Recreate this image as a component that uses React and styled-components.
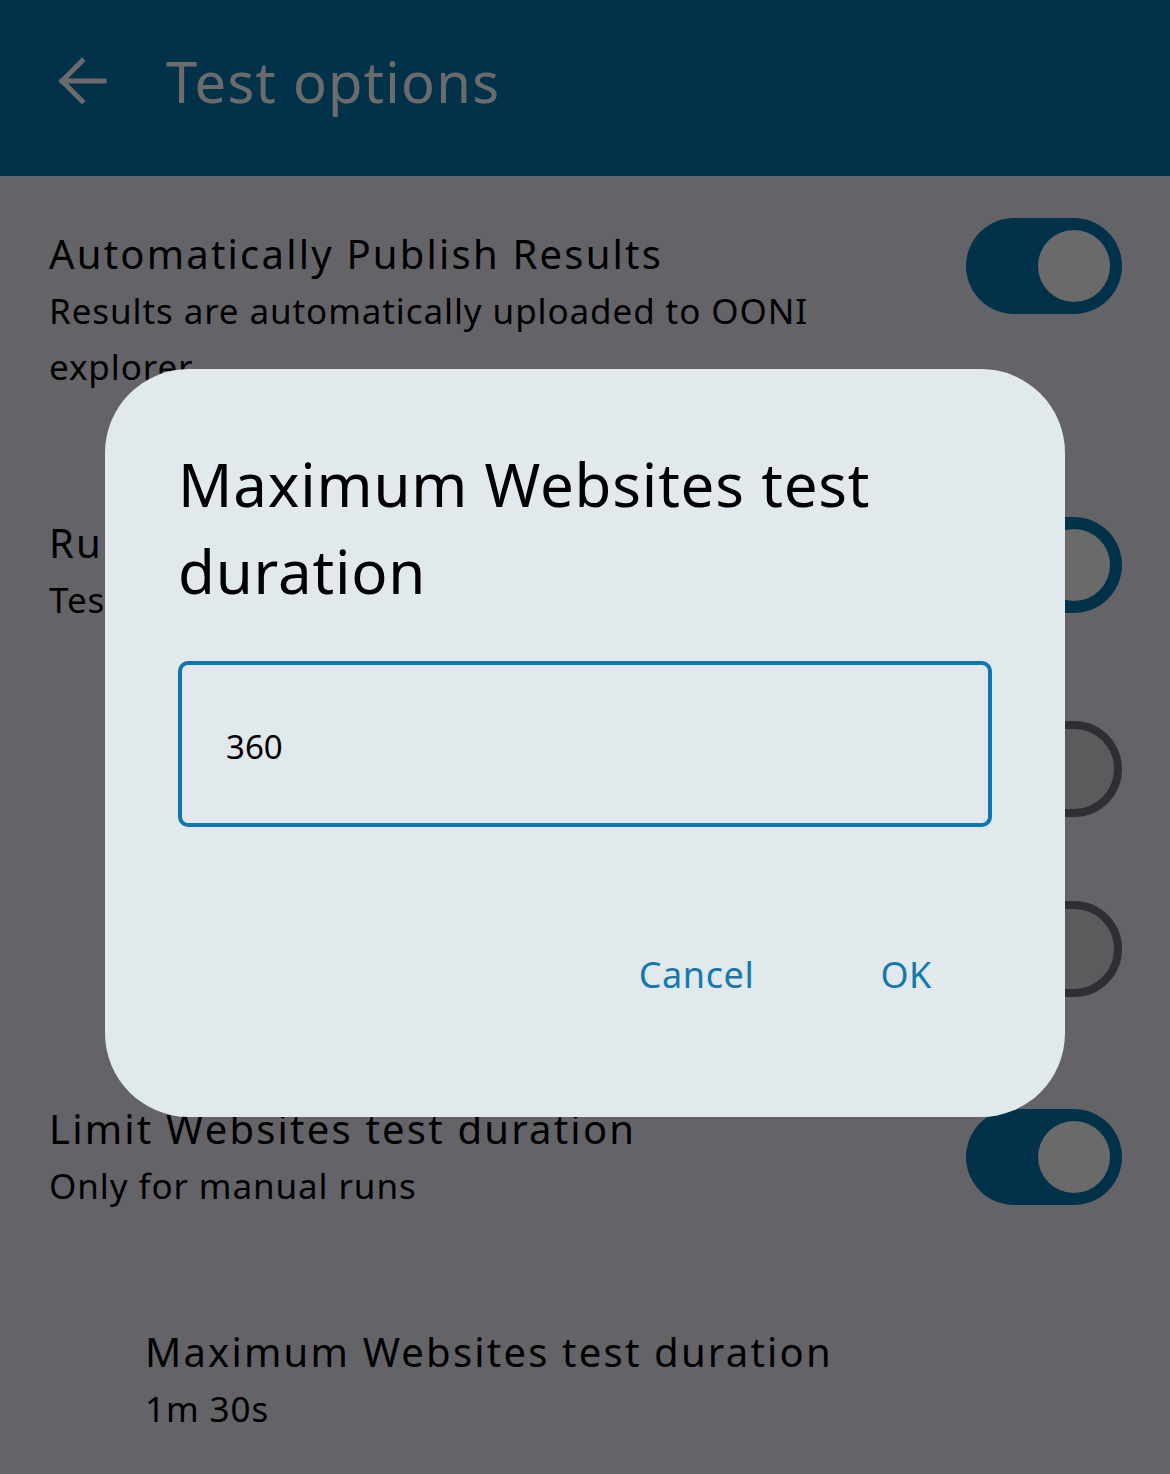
import React from "react";
import styled, { createGlobalStyle } from "styled-components";

const GlobalStyle = createGlobalStyle`
  html, body {
    margin: 0;
    padding: 0;
    background: #eeecf8;
    font-family: "Noto Sans", "Open Sans", sans-serif;
  }
`;

const Screen = styled.div`
  position: relative;
  width: 1170px;
  height: 1474px;
  overflow: hidden;
  background: #eeecf8;
`;

const AppBar = styled.header`
  height: 176px;
  background: #0577b0;
  display: flex;
  align-items: center;
  padding: 0 0 14px 56px;
  box-sizing: border-box;
  gap: 58px;
  color: #ffffff;
  h1 {
    margin: 0;
    font-size: 56px;
    font-weight: 400;
    letter-spacing: 1.3px;
  }
`;

const List = styled.div`
  display: flex;
  flex-direction: column;
`;

const Row = styled.div`
  display: flex;
  align-items: ${(p) => (p.$top ? "flex-start" : "center")};
  justify-content: space-between;
  padding: ${(p) => p.$pad || "0"};
  padding-left: ${(p) => (p.$indent ? "145px" : "49px")};
  padding-right: 48px;
  min-height: ${(p) => p.$h || 180}px;
  box-sizing: border-box;
`;

const Texts = styled.div`
  display: flex;
  flex-direction: column;
  max-width: 780px;
  padding-top: ${(p) => p.$offset || 0}px;
  color: #000;
`;

const Title = styled.div`
  font-size: 40px;
  line-height: 59px;
  letter-spacing: 2.2px;
`;

const Sub = styled.div`
  font-size: 35px;
  line-height: 56px;
  letter-spacing: 0.9px;
`;

const Switch = styled.div`
  width: 156px;
  height: 96px;
  border-radius: 48px;
  box-sizing: border-box;
  flex-shrink: 0;
  display: flex;
  align-items: center;
  justify-content: ${(p) => (p.$on ? "flex-end" : "flex-start")};
  padding: 0 12px;
  background: ${(p) => (p.$on ? "#0577b0" : "#d6d9db")};
  border: ${(p) => (p.$on ? "none" : "8px solid #6e6e79")};
  &::after {
    content: "";
    width: ${(p) => (p.$on ? 72 : 48)}px;
    height: ${(p) => (p.$on ? 72 : 48)}px;
    border-radius: 50%;
    background: ${(p) => (p.$on ? "#fdfdfd" : "#6e6e79")};
  }
`;

const Scrim = styled.div`
  position: absolute;
  inset: 0;
  background: rgba(0, 0, 0, 0.58);
`;

const Dialog = styled.div`
  position: absolute;
  left: 105px;
  top: 369px;
  width: 960px;
  height: 748px;
  box-sizing: border-box;
  background: #e2e9ec;
  border-radius: 84px;
  padding: 72px 73px 0 73px;
  display: flex;
  flex-direction: column;
  h2 {
    margin: 0;
    font-size: 60px;
    font-weight: 400;
    line-height: 87px;
    letter-spacing: 0.8px;
    color: #000;
    max-width: 740px;
  }
`;

const Field = styled.div`
  margin-top: 46px;
  height: 166px;
  border: 4px solid #0f77b0;
  border-radius: 10px;
  box-sizing: border-box;
  display: flex;
  align-items: center;
  padding-left: 44px;
  padding-top: 4px;
  font-size: 33px;
  color: #000;
`;

const Actions = styled.div`
  display: flex;
  justify-content: flex-end;
  gap: 126px;
  margin-top: 123px;
  padding-right: 60px;
`;

const TextButton = styled.button`
  border: none;
  background: none;
  padding: 0;
  font-family: inherit;
  font-size: 36px;
  letter-spacing: 0.6px;
  color: #1379ae;
`;

function BackArrow() {
  return (
    <svg width="52" height="52" viewBox="0 0 52 52" fill="none" stroke="#fff" strokeWidth="5" strokeLinecap="square">
      <path d="M6 26h42M26 6L6 26l20 20" />
    </svg>
  );
}

export default function App() {
  return (
    <Screen>
      <GlobalStyle />
      <AppBar>
        <BackArrow />
        <h1>Test options</h1>
      </AppBar>
      <List>
        <Row $h={280} $top $pad="42px 0 0 0">
          <Texts $offset={6}>
            <Title>Automatically Publish Results</Title>
            <Sub>Results are automatically uploaded to OONI explorer</Sub>
          </Texts>
          <Switch $on />
        </Row>
        <Row $h={218}>
          <Texts $offset={10}>
            <Title>Run tests automatically</Title>
            <Sub>Tests will run in the background</Sub>
          </Texts>
          <Switch $on />
        </Row>
        <Row $h={190} $indent>
          <Texts>
            <Title>Only on WiFi</Title>
          </Texts>
          <Switch />
        </Row>
        <Row $h={170} $indent>
          <Texts>
            <Title>Only while charging</Title>
          </Texts>
          <Switch />
        </Row>
        <Row $h={245}>
          <Texts>
            <Title>Limit Websites test duration</Title>
            <Sub>Only for manual runs</Sub>
          </Texts>
          <Switch $on />
        </Row>
        <Row $h={200} $indent>
          <Texts>
            <Title>Maximum Websites test duration</Title>
            <Sub>1m 30s</Sub>
          </Texts>
        </Row>
      </List>
      <Scrim />
      <Dialog>
        <h2>Maximum Websites test duration</h2>
        <Field>360</Field>
        <Actions>
          <TextButton>Cancel</TextButton>
          <TextButton>OK</TextButton>
        </Actions>
      </Dialog>
    </Screen>
  );
}
